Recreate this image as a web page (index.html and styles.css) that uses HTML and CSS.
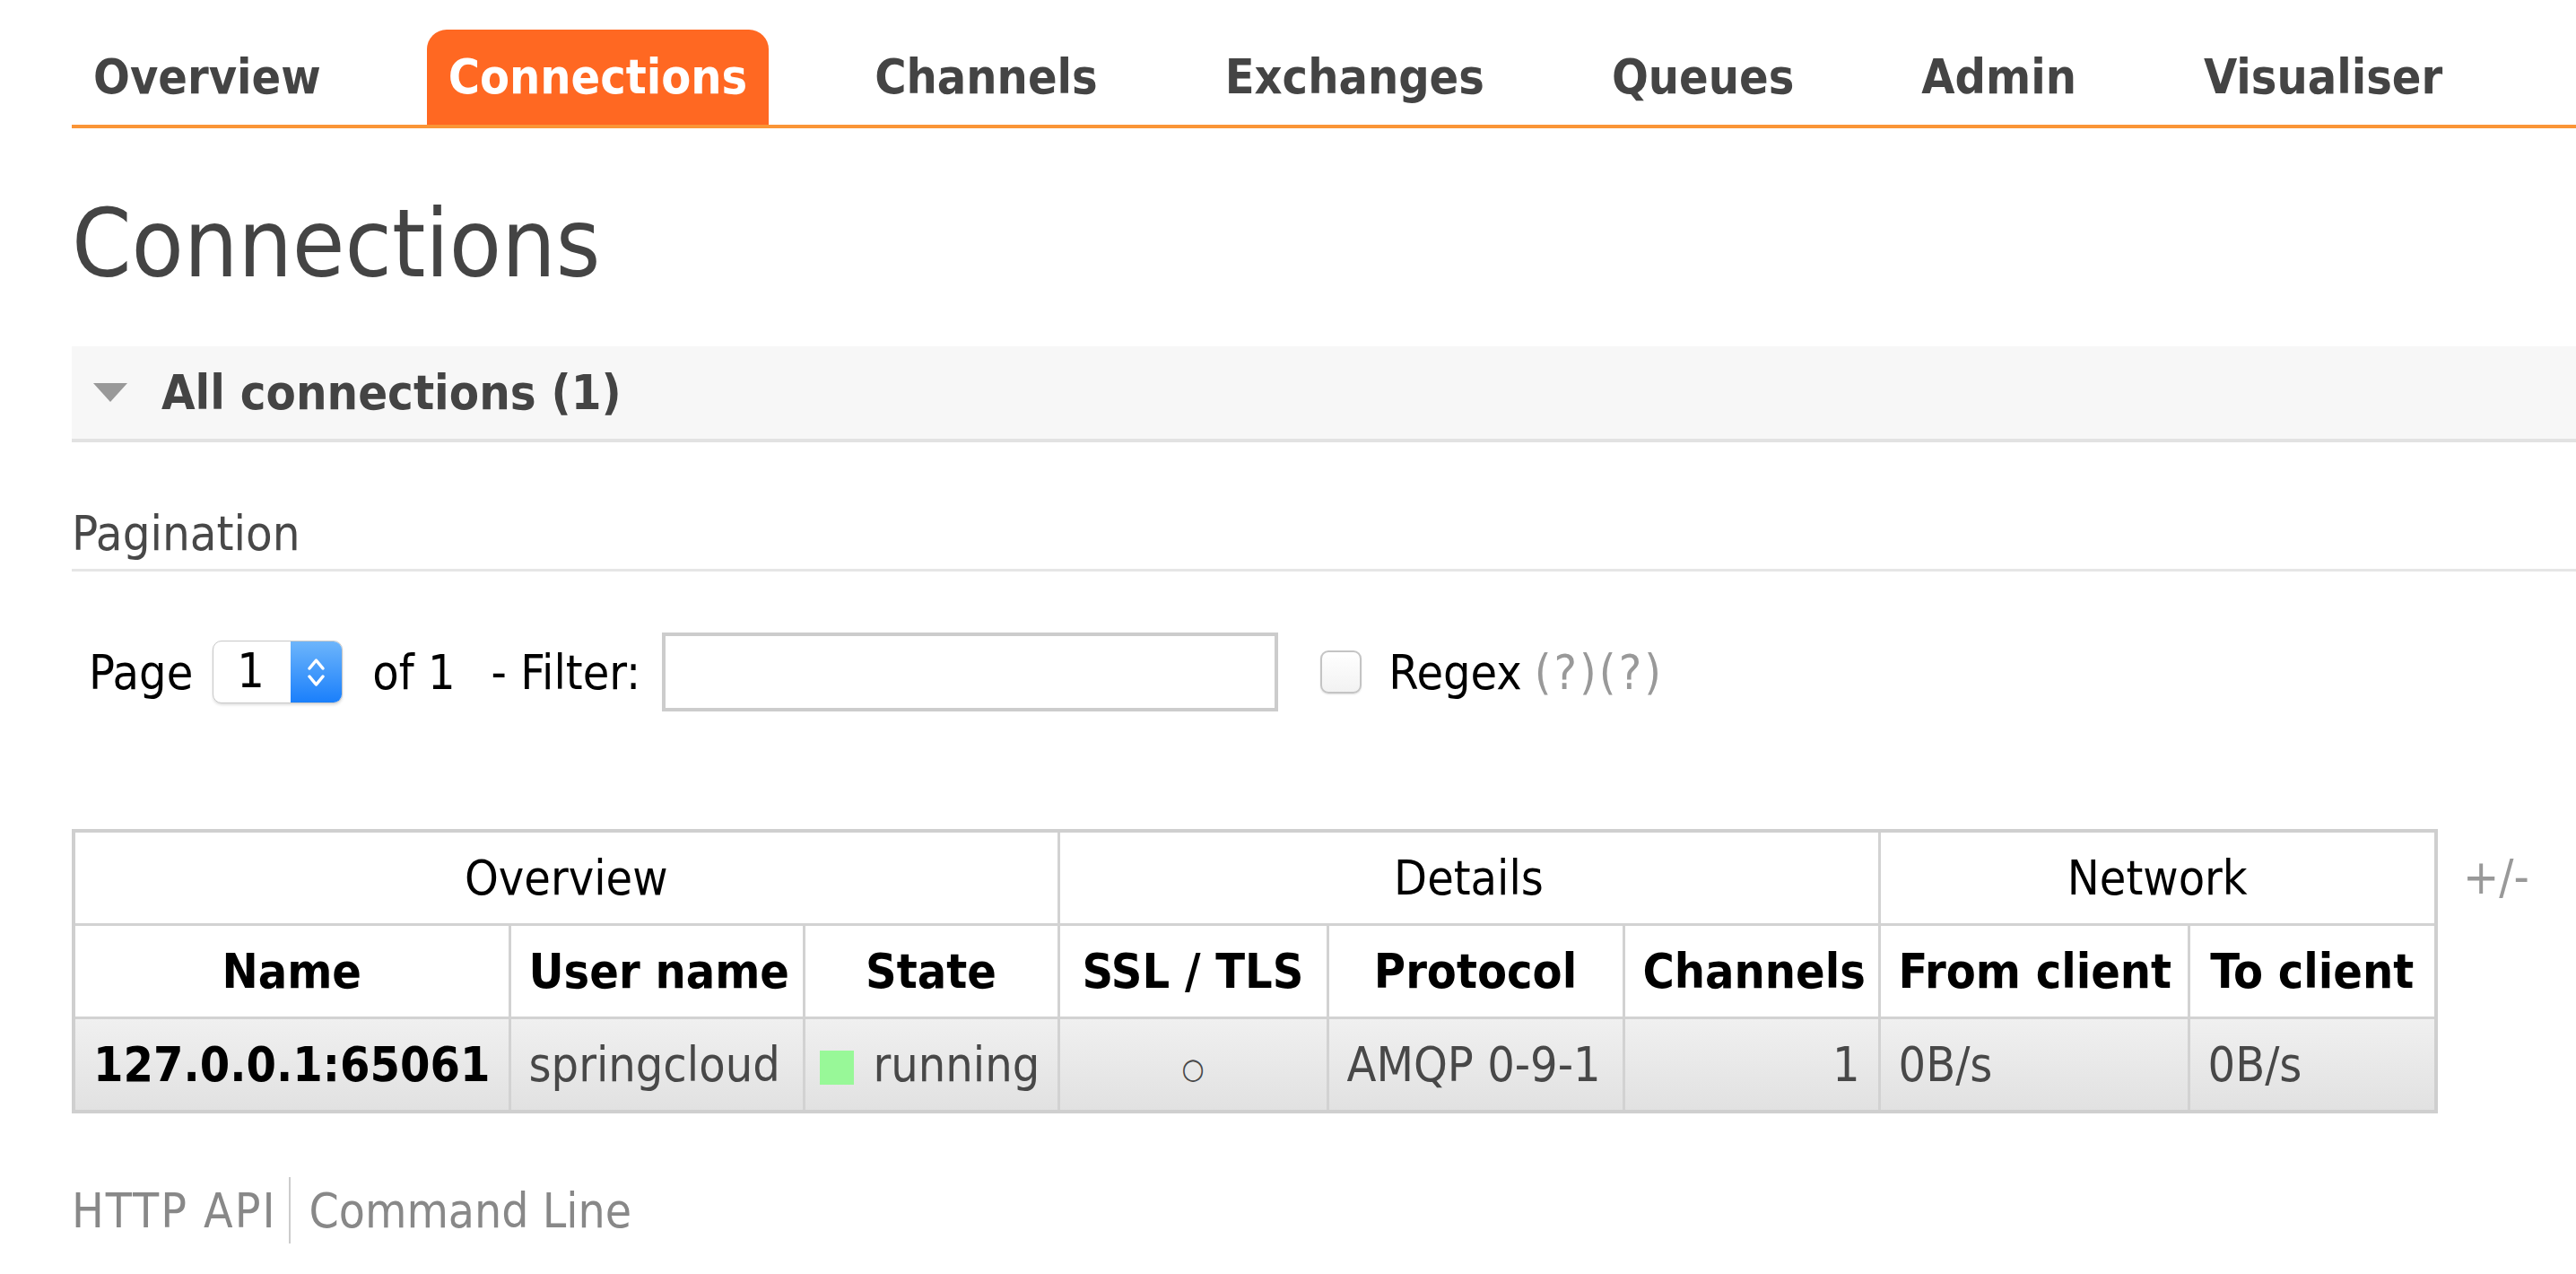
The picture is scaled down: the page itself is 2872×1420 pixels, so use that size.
FILE: index.html
```html
<!DOCTYPE html>
<html lang="en">
<head>
<meta charset="utf-8">
<title>RabbitMQ Management - Connections</title>
<link rel="stylesheet" href="styles.css">
</head>
<body>
<div class="page">
  <nav class="menu">
    <ul>
      <li><a href="#">Overview</a></li>
      <li><a href="#" class="selected">Connections</a></li>
      <li><a href="#">Channels</a></li>
      <li><a href="#">Exchanges</a></li>
      <li><a href="#">Queues</a></li>
      <li><a href="#">Admin</a></li>
      <li><a href="#">Visualiser</a></li>
    </ul>
  </nav>

  <h1 class="title">Connections</h1>

  <div class="section-bar">
    <span class="triangle"></span>
    <h2 class="section-title">All connections (1)</h2>
  </div>

  <h3 class="subhead">Pagination</h3>

  <div class="filter-row">
    <span class="lbl">Page</span>
    <div class="select">
      <span class="select-value">1</span>
      <span class="select-arrows">
        <svg width="57" height="70" viewBox="0 0 57 70"><path d="M21 31 L28.5 22 L36 31" fill="none" stroke="#fff" stroke-width="3.5" stroke-linecap="round" stroke-linejoin="round"/><path d="M21 40 L28.5 49 L36 40" fill="none" stroke="#fff" stroke-width="3.5" stroke-linecap="round" stroke-linejoin="round"/></svg>
      </span>
    </div>
    <span class="lbl of">of 1</span>
    <span class="lbl filter">- Filter:</span>
    <div class="text-input"></div>
    <span class="checkbox"></span>
    <span class="lbl regex">Regex</span>
    <span class="help">(?)(?)</span>
  </div>

  <div class="table-wrap">
    <table class="list">
      <colgroup>
        <col class="c-name"><col class="c-user"><col class="c-state"><col class="c-ssl"><col class="c-proto"><col class="c-chan"><col class="c-from"><col class="c-to">
      </colgroup>
      <thead>
        <tr class="group-row">
          <th colspan="3">Overview</th>
          <th colspan="3">Details</th>
          <th colspan="2">Network</th>
        </tr>
        <tr class="head-row">
          <th>Name</th>
          <th>User name</th>
          <th>State</th>
          <th>SSL / TLS</th>
          <th>Protocol</th>
          <th>Channels</th>
          <th>From client</th>
          <th>To client</th>
        </tr>
      </thead>
      <tbody>
        <tr class="data-row">
          <td class="name">127.0.0.1:65061</td>
          <td>springcloud</td>
          <td class="state"><span class="status"></span>running</td>
          <td class="center"><span class="ring">○</span></td>
          <td>AMQP 0-9-1</td>
          <td class="right">1</td>
          <td>0B/s</td>
          <td>0B/s</td>
        </tr>
      </tbody>
    </table>
    <span class="plusminus">+/-</span>
  </div>

  <div class="footer">
    <a href="#" class="api">HTTP API</a>
    <span class="sep"></span>
    <a href="#">Command Line</a>
  </div>
</div>
</body>
</html>
```

FILE: styles.css
```css
html, body {
  margin: 0;
  padding: 0;
  background: #fff;
}
body {
  font-family: "DejaVu Sans Condensed", "DejaVu Sans", Verdana, sans-serif;
  font-stretch: semi-condensed;
  font-size: 53.5px;
  color: #484848;
}
.page {
  padding-left: 80px;
}

/* menu */
.menu {
  margin-top: 33px;
  border-bottom: 4px solid #fa9536;
}
.menu ul {
  list-style: none;
  margin: 0;
  padding: 0;
  display: flex;
  gap: 94px;
}
.menu a {
  display: block;
  padding: 0 24px;
  line-height: 106px;
  font-weight: bold;
  color: #444;
  text-decoration: none;
}
.menu a.selected {
  background: #ff6822;
  color: #fff;
  border-radius: 22px 22px 0 0;
}

/* title */
.title {
  margin: 77px 0 0 0;
  font-size: 106px;
  line-height: 104px;
  font-weight: normal;
  color: #444;
}

/* section bar */
.section-bar {
  margin-top: 62px;
  height: 103px;
  background: #f7f7f7;
  border-bottom: 4px solid #e2e2e2;
  display: flex;
  align-items: center;
}
.triangle {
  width: 0;
  height: 0;
  margin-left: 24px;
  border-left: 19px solid transparent;
  border-right: 19px solid transparent;
  border-top: 21px solid #999;
}
.section-title {
  margin: 0 0 0 38px;
  font-size: 54px;
  font-weight: bold;
  color: #444;
}

/* pagination */
.subhead {
  margin: 72px 0 0 0;
  font-size: 54px;
  line-height: 60px;
  font-weight: normal;
  color: #484848;
  padding-bottom: 9px;
  border-bottom: 3px solid #e6e6e6;
}
.filter-row {
  margin-top: 62px;
  height: 100px;
  display: flex;
  align-items: center;
  padding-left: 19px;
  color: #000;
}
.lbl {
  white-space: nowrap;
}
.select {
  margin-left: 22px;
  width: 145px;
  height: 70px;
  box-sizing: border-box;
  border: 1px solid #c8c8c8;
  border-radius: 10px;
  display: flex;
  overflow: hidden;
  box-shadow: 0 2px 3px rgba(0,0,0,0.12);
  background: #fff;
}
.select-value {
  flex: 1;
  padding-left: 26px;
  line-height: 66px;
  color: #000;
}
.select-arrows {
  width: 57px;
  background: linear-gradient(#6db5fb, #1a7ffb);
  display: flex;
  align-items: center;
  justify-content: center;
}
.select-arrows svg {
  display: block;
}
.of {
  margin-left: 33px;
}
.filter {
  margin-left: 40px;
}
.text-input {
  margin-left: 24px;
  width: 687px;
  height: 88px;
  box-sizing: border-box;
  border: 4px solid #cccccc;
  background: #fff;
}
.checkbox {
  margin-left: 47px;
  width: 46px;
  height: 48px;
  box-sizing: border-box;
  border: 2px solid #c4c4c4;
  border-radius: 9px;
  background: linear-gradient(#ffffff, #f2f2f2);
  box-shadow: 0 1px 2px rgba(0,0,0,0.12);
}
.regex {
  margin-left: 30px;
}
.help {
  margin-left: 14px;
  color: #999;
  letter-spacing: 3px;
}

/* table */
.table-wrap {
  margin-top: 125px;
  display: flex;
  align-items: flex-start;
}
.list {
  border-collapse: collapse;
  table-layout: fixed;
  width: 2634px;
  border: 4px solid #cfcfcf;
}
.c-name { width: 486px; }
.c-user { width: 328px; }
.c-state { width: 284px; }
.c-ssl { width: 300px; }
.c-proto { width: 330px; }
.c-chan { width: 285px; }
.c-from { width: 345px; }
.c-to { width: 276px; }

.list th, .list td {
  border: 3px solid #d2d2d2;
  padding: 0 20px;
  height: 101px;
  white-space: nowrap;
}
.group-row th {
  font-weight: normal;
  color: #000;
  text-align: center;
}
.head-row th {
  font-weight: bold;
  color: #000;
  text-align: center;
}
.data-row {
  background: linear-gradient(#f0f0f0, #e1e1e1);
}
.data-row td {
  color: #484848;
  text-align: left;
}
.data-row td.name {
  font-weight: bold;
  color: #000;
}
.data-row td.center {
  text-align: center;
}
.data-row td.right {
  text-align: right;
}
.data-row td.state {
  padding-left: 16px;
}
.ring {
  font-size: 32px;
  vertical-align: 3px;
}
.status {
  display: inline-block;
  width: 38px;
  height: 38px;
  background: #98f898;
  margin-right: 22px;
  vertical-align: -4px;
}
.plusminus {
  margin-left: 28px;
  margin-top: 22px;
  color: #999;
}

/* footer */
.footer {
  margin-top: 71px;
  height: 74px;
  display: flex;
  align-items: center;
  font-size: 53px;
}
.footer a {
  color: #888;
  text-decoration: none;
}
.footer a.api {
  letter-spacing: 2px;
}
.sep {
  width: 2px;
  height: 74px;
  background: #ccc;
  margin: 0 20px 0 14px;
}
```
